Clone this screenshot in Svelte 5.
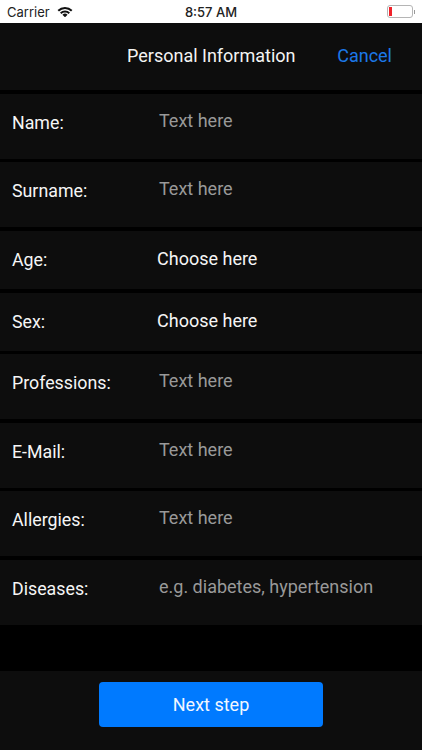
<script>
	const rows = [
		{ label: "Name:", hint: "Text here" },
		{ label: "Surname:", hint: "Text here" },
		{ label: "Age:", choice: "Choose here" },
		{ label: "Sex:", choice: "Choose here" },
		{ label: "Professions:", hint: "Text here" },
		{ label: "E-Mail:", hint: "Text here" },
		{ label: "Allergies:", hint: "Text here" },
		{ label: "Diseases:", hint: "e.g. diabetes, hypertension" }
	];
</script>

<div class="screen">
	<div class="status">
		<div class="status-left">
			<span>Carrier</span>
			<svg width="16" height="11.3" viewBox="0 0 17 12">
				<path d="M0.6 4.2A11.2 11.2 0 0 1 16.4 4.2L14.9 5.8A9 9 0 0 0 2.1 5.8Z" fill="#111" />
				<path d="M3.2 6.8A7.6 7.6 0 0 1 13.8 6.8L12.3 8.4A5.4 5.4 0 0 0 4.7 8.4Z" fill="#111" />
				<path d="M5.8 9.4A3.8 3.8 0 0 1 11.2 9.4L8.5 12Z" fill="#111" />
			</svg>
		</div>
		<span class="clock">8:57 AM</span>
		<div class="battery">
			<div class="battery-body"><div class="battery-level"></div></div>
			<div class="battery-tip"></div>
		</div>
	</div>

	<div class="nav">
		<span class="title">Personal Information</span>
		<span class="cancel">Cancel</span>
	</div>

	<div class="form">
		{#each rows as row}
			<div class="row" class:short={row.choice}>
				<span class="label">{row.label}</span>
				{#if row.choice}
					<span class="choice">{row.choice}</span>
				{:else}
					<span class="hint">{row.hint}</span>
				{/if}
			</div>
		{/each}
	</div>

	<div class="footer">
		<button class="next">Next step</button>
	</div>
</div>

<style>
	:global(body) {
		margin: 0;
		background: #000;
	}

	.screen {
		width: 422px;
		height: 750px;
		display: flex;
		flex-direction: column;
		background: #000;
		color: #fff;
		font-family: Roboto, "Liberation Sans", sans-serif;
		overflow: hidden;
	}

	.status {
		height: 23px;
		flex: none;
		display: grid;
		grid-template-columns: 1fr auto 1fr;
		align-items: center;
		padding: 0 7px;
		background: #fff;
		color: #222;
		font-family: Inter, "Liberation Sans", sans-serif;
		font-size: 13px;
	}

	.status-left {
		display: flex;
		align-items: center;
		gap: 7px;
	}

	.clock {
		font-weight: 500;
	}

	.battery {
		justify-self: end;
		display: flex;
		align-items: center;
		gap: 1px;
	}

	.battery-body {
		width: 22px;
		height: 9px;
		padding: 1px;
		border: 1px solid #b5b5b5;
		border-radius: 3px;
	}

	.battery-level {
		width: 3px;
		height: 100%;
		background: #f0222a;
	}

	.battery-tip {
		width: 1px;
		height: 4px;
		background: #999;
	}

	.nav {
		height: 67px;
		flex: none;
		display: flex;
		align-items: center;
		justify-content: flex-end;
		box-sizing: border-box;
		padding: 0 30px 2px 127px;
		background: #0d0d0d;
		font-size: 18px;
	}

	.title {
		margin-right: auto;
		color: #f4f4f4;
	}

	.cancel {
		color: #1c78e8;
	}

	.form {
		flex: 1;
		display: flex;
		flex-direction: column;
		gap: 3.45px;
		padding-top: 3.9px;
	}

	.row {
		height: 65px;
		flex: none;
		display: flex;
		align-items: center;
		box-sizing: border-box;
		padding: 0 0 8px 12px;
		background: #0d0d0d;
	}

	.row.short {
		height: 58.3px;
		padding-bottom: 0;
	}

	.label {
		width: 145px;
		flex: none;
		font-size: 17.8px;
		color: #f6f6f6;
	}

	.hint {
		margin: -4px 0 0 2px;
		font-size: 18px;
		color: #999;
	}

	.choice {
		margin-top: -2px;
		font-size: 18px;
		color: #f5f5f5;
	}

	.footer {
		height: 79px;
		flex: none;
		display: flex;
		justify-content: center;
		padding-top: 11px;
		box-sizing: border-box;
		background: #0d0d0d;
	}

	.next {
		width: 224px;
		height: 45px;
		border: none;
		border-radius: 4px;
		background: #007aff;
		color: #f2f7ff;
		font-family: inherit;
		font-size: 18px;
	}
</style>
